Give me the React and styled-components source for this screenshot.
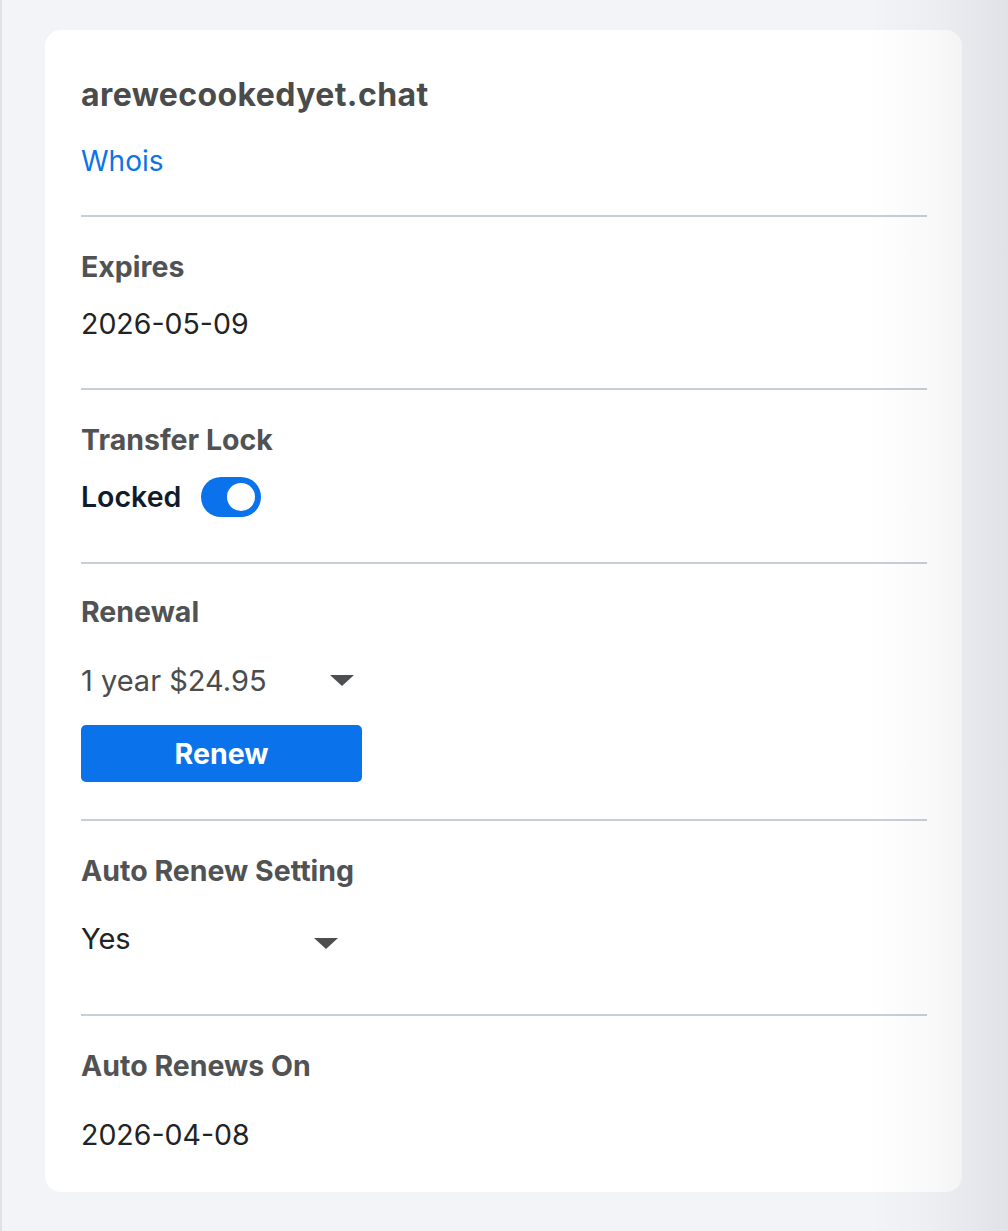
import React from "react";
import styled, { createGlobalStyle } from "styled-components";

const Global = createGlobalStyle`
  html, body { margin: 0; padding: 0; }
  body {
    background: #f3f4f8;
    font-family: Inter, Lato, "Open Sans", Arial, sans-serif;
    -webkit-font-smoothing: antialiased;
  }
`;

const Page = styled.div`
  position: relative;
  min-height: 1231px;
  box-sizing: border-box;
  padding: 30px 46px 40px 43px;
  border-left: 2px solid #e1e2e5;
  background: #f3f4f8;
`;

const EdgeShade = styled.div`
  position: absolute;
  top: 0;
  right: 0;
  bottom: 0;
  width: 140px;
  pointer-events: none;
  background: linear-gradient(to right, rgba(30, 35, 50, 0) 0%, rgba(30, 35, 50, 0.03) 50%, rgba(30, 35, 50, 0.085) 100%);
`;

const Card = styled.div`
  background: #ffffff;
  border-radius: 16px;
  padding: 0 35px 0 36px;
  box-sizing: border-box;
  width: 917px;
`;

const Section = styled.section`
  display: flex;
  flex-direction: column;
  align-items: flex-start;
  padding: ${(p) => p.$pad};
  border-bottom: ${(p) => (p.$last ? "none" : "2px solid #c4cfd8")};
`;

const Title = styled.h1`
  margin: 0;
  font-size: 32px;
  line-height: 34px;
  font-weight: 700;
  letter-spacing: 0.4px;
  color: #4a4b4c;
`;

const Link = styled.a`
  margin-top: ${(p) => p.$mt || 0}px;
  font-size: 28px;
  line-height: 34px;
  color: #0b74e8;
  text-decoration: none;
`;

const Label = styled.div`
  font-size: 28.5px;
  line-height: 34px;
  font-weight: 700;
  color: #515253;
`;

const Value = styled.div`
  margin-top: ${(p) => p.$mt || 0}px;
  font-size: 28.5px;
  line-height: 34px;
  color: #222324;
`;

const ToggleRow = styled.div`
  margin-top: ${(p) => p.$mt || 0}px;
  display: flex;
  align-items: center;
  gap: 20px;
`;

const ToggleText = styled.span`
  font-size: 28.5px;
  line-height: 34px;
  font-weight: 600;
  color: #0f1c2b;
`;

const Toggle = styled.span`
  position: relative;
  display: inline-block;
  width: 60px;
  height: 40px;
  border-radius: 20px;
  background: #0a73eb;
  &::after {
    content: "";
    position: absolute;
    top: 6px;
    right: 6px;
    width: 28px;
    height: 28px;
    border-radius: 50%;
    background: #ffffff;
  }
`;

const Select = styled.div`
  margin-top: ${(p) => p.$mt || 0}px;
  width: ${(p) => p.$w}px;
  height: 44px;
  display: flex;
  align-items: center;
  justify-content: space-between;
  padding-right: ${(p) => p.$pr || 0}px;
  box-sizing: border-box;
  font-size: 29px;
  color: ${(p) => p.$color || "#222324"};
`;

const Caret = styled.span`
  width: 0;
  height: 0;
  margin-top: ${(p) => p.$dy || 0}px;
  border-left: 12px solid transparent;
  border-right: 12px solid transparent;
  border-top: 11px solid #4d4e4f;
`;

const Button = styled.button`
  margin-top: 23px;
  width: 281px;
  height: 57px;
  border: none;
  border-radius: 5px;
  background: #0a73eb;
  color: #ffffff;
  font-family: inherit;
  font-size: 28.5px;
  font-weight: 700;
  cursor: pointer;
`;

export default function App() {
  return (
    <>
      <Global />
      <Page>
        <Card>
          <Section $pad="48px 0 37px">
            <Title>arewecookedyet.chat</Title>
            <Link href="#" $mt={32}>Whois</Link>
          </Section>
          <Section $pad="33px 0 47px">
            <Label>Expires</Label>
            <Value $mt={23}>2026-05-09</Value>
          </Section>
          <Section $pad="33px 0 45px">
            <Label>Transfer Lock</Label>
            <ToggleRow $mt={20}>
              <ToggleText>Locked</ToggleText>
              <Toggle role="switch" aria-checked="true" />
            </ToggleRow>
          </Section>
          <Section $pad="31px 0 37px">
            <Label>Renewal</Label>
            <Select $mt={29} $w={281} $pr={8} $color="#4b4c4d">
              <span>1 year $24.95</span>
              <Caret />
            </Select>
            <Button>Renew</Button>
          </Section>
          <Section $pad="33px 0 54px">
            <Label>Auto Renew Setting</Label>
            <Select $mt={28} $w={257}>
              <span>Yes</span>
              <Caret $dy={10} />
            </Select>
          </Section>
          <Section $pad="33px 0 40px" $last>
            <Label>Auto Renews On</Label>
            <Value $mt={35}>2026-04-08</Value>
          </Section>
        </Card>
        <EdgeShade />
      </Page>
    </>
  );
}
